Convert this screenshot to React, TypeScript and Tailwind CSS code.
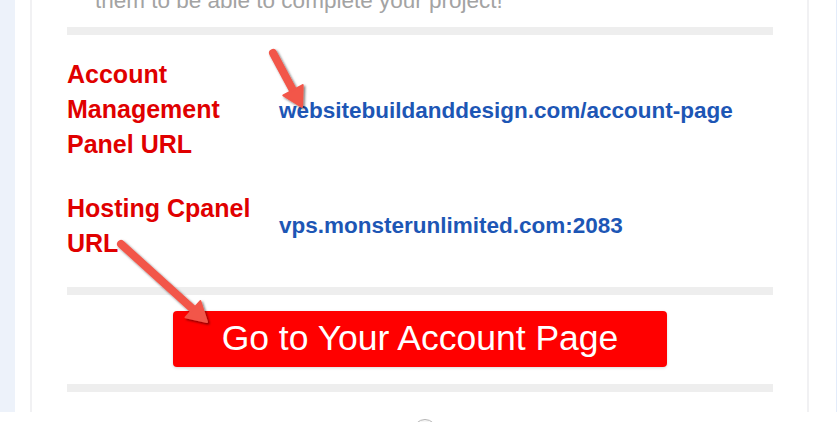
import React from "react";

function Arrow({ x1, y1, x2, y2 }: { x1: number; y1: number; x2: number; y2: number }) {
  const dx = x2 - x1;
  const dy = y2 - y1;
  const len = Math.hypot(dx, dy);
  const ux = dx / len;
  const uy = dy / len;
  const nx = -uy;
  const ny = ux;
  const headLen = 19;
  const headHalf = 11;
  const bx = x2 - ux * headLen;
  const by = y2 - uy * headLen;
  const pts = [
    [x2, y2],
    [bx + nx * headHalf, by + ny * headHalf],
    [bx - nx * headHalf, by - ny * headHalf],
  ]
    .map((p) => p.join(","))
    .join(" ");
  return (
    <g filter="url(#ashadow)">
      <line x1={x1} y1={y1} x2={bx + ux * 2} y2={by + uy * 2} stroke="#f2564a" strokeWidth={8} strokeLinecap="round" />
      <polygon points={pts} fill="#f2564a" stroke="#f2564a" strokeWidth={2} strokeLinejoin="round" />
    </g>
  );
}

export default function App() {
  return (
    <div
      className="relative w-[837px] h-[422px] overflow-hidden bg-white"
      style={{ fontFamily: '"Liberation Sans", Arial, sans-serif' }}
    >
      <div className="flex h-[412px]">
        <div className="w-[15px] bg-[#edf2fa]" />
        <div className="w-[15px]" />
        <div className="w-[779px] border-x-2 border-[#f1f1f3] pl-[35px] pr-[34px]">
          <p className="mt-[-12px] pl-[28px] text-[22.5px] leading-[26px] text-[#a3a3a3] whitespace-nowrap">
            them to be able to complete your project!
          </p>
          <div className="mt-[13px] h-[8px] bg-[#eeeeee]" />

          <div className="mt-[22px] grid grid-cols-[212px_1fr] items-center">
            <div className="text-[25px] leading-[35px] font-bold text-[#e00000] pr-[10px]">
              Account Management Panel URL
            </div>
            <div className="pt-[3px] text-[22.5px] leading-[26px] font-bold text-[#1d56b5] whitespace-nowrap">
              websitebuildanddesign.com/account-page
            </div>
          </div>

          <div className="mt-[29px] grid grid-cols-[212px_1fr] items-center">
            <div className="text-[25px] leading-[35px] font-bold text-[#e00000] pr-[10px]">
              Hosting Cpanel URL
            </div>
            <div className="text-[22.5px] leading-[26px] font-bold text-[#1d56b5] whitespace-nowrap">
              vps.monsterunlimited.com:2083
            </div>
          </div>

          <div className="mt-[26px] h-[8px] bg-[#eeeeee]" />

          <div className="mt-[16px] flex justify-center">
            <div className="w-[494px] h-[56px] rounded-[4px] bg-[#ff0000] shadow-[0_1px_3px_rgba(0,0,0,0.15)] flex items-center justify-center text-white text-[35.5px] leading-none">
              Go to Your Account Page
            </div>
          </div>

          <div className="mt-[17px] h-[8px] bg-[#eeeeee]" />
        </div>
        <div className="flex-1" />
        <div className="w-[1px] bg-[#e3ecfa]" />
      </div>

      <svg className="absolute left-0 top-0 pointer-events-none" width="837" height="422">
        <defs>
          <filter id="ashadow" x="-50%" y="-50%" width="200%" height="200%">
            <feDropShadow dx="1.5" dy="1.5" stdDeviation="1.2" floodColor="#000" floodOpacity="0.55" />
          </filter>
        </defs>
        <Arrow x1={273} y1={53} x2={302} y2={107} />
        <Arrow x1={121} y1={244} x2={207} y2={322} />
      </svg>

      <div className="absolute left-[413px] top-[419px] w-[24px] h-[24px] rounded-full border border-[#b5b5b5] bg-[#f6f6f6]" />
    </div>
  );
}
